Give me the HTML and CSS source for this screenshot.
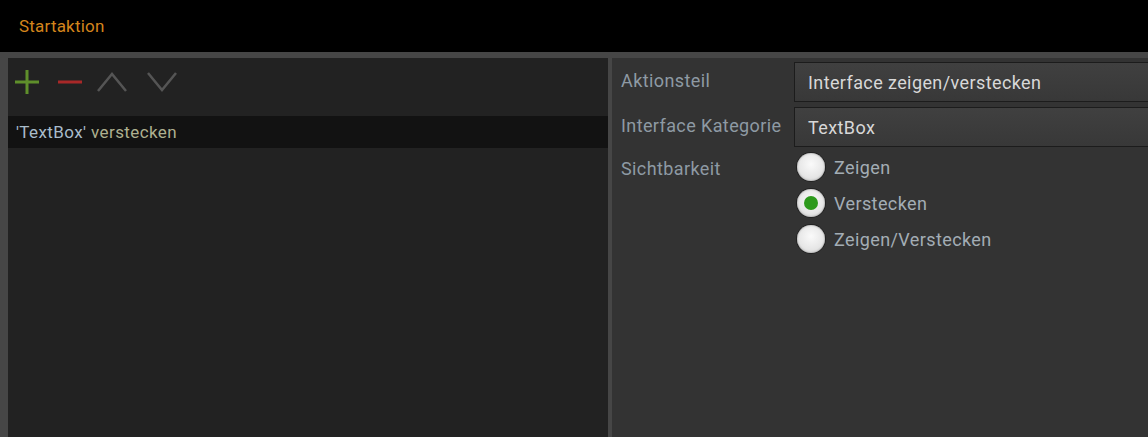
FILE: index.html
```html
<!DOCTYPE html>
<html>
<head>
<meta charset="utf-8">
<link rel="stylesheet" href="styles.css">
</head>
<body>
<div class="topbar"><span class="title">Startaktion</span></div>
<div class="main">
  <div class="left">
    <div class="toolbar">
      <svg class="ico plus" width="24" height="24" viewBox="0 0 24 24"><path d="M12 0V24M0 12H24" stroke="#5f8f2b" stroke-width="3"/></svg>
      <svg class="ico minus" width="24" height="24" viewBox="0 0 24 24"><path d="M0 12H24" stroke="#a82828" stroke-width="3"/></svg>
      <svg class="ico up" width="30" height="24" viewBox="0 0 30 24"><path d="M1 21L15 4L29 21" fill="none" stroke="#555" stroke-width="2.5"/></svg>
      <svg class="ico down" width="30" height="24" viewBox="0 0 30 24"><path d="M1 3L15 20L29 3" fill="none" stroke="#555" stroke-width="2.5"/></svg>
    </div>
    <div class="item"><span class="txt"><span class="q">'TextBox'</span> <span class="v">verstecken</span></span></div>
  </div>
  <div class="divider"></div>
  <div class="right">
    <div class="row">
      <div class="label">Aktionsteil</div>
      <div class="box">Interface zeigen/verstecken</div>
    </div>
    <div class="row">
      <div class="label">Interface Kategorie</div>
      <div class="box">TextBox</div>
    </div>
    <div class="row">
      <div class="label lbl-radio">Sichtbarkeit</div>
      <div class="radios">
        <div class="radio"><span class="dot"></span><span>Zeigen</span></div>
        <div class="radio on"><span class="dot"></span><span>Verstecken</span></div>
        <div class="radio"><span class="dot"></span><span>Zeigen/Verstecken</span></div>
      </div>
    </div>
  </div>
</div>
</body>
</html>
```

FILE: styles.css
```css
html, body {
  margin: 0;
  padding: 0;
  height: 100%;
  background: #333;
  overflow: hidden;
  font-family: "Roboto", "DejaVu Sans", sans-serif;
  font-size: 18px;
}
.topbar {
  height: 52px;
  background: #000;
  display: flex;
  align-items: center;
  padding-left: 19px;
}
.title {
  color: #d4851c;
  font-size: 17px;
  letter-spacing: 0.2px;
}
.main {
  display: flex;
  height: calc(100% - 52px);
  border-top: 6px solid #464646;
  box-sizing: border-box;
  padding-left: 8px;
  background: #464646;
}
.left {
  width: 600px;
  flex: none;
  background: #222;
}
.toolbar {
  height: 58px;
  box-sizing: border-box;
  display: flex;
  align-items: flex-start;
  padding-left: 7px;
  padding-top: 12px;
}
.toolbar .ico { display: block; }
.toolbar .minus { margin-left: 19px; }
.toolbar .up { margin-left: 15px; }
.toolbar .down { margin-left: 20px; }
.item {
  height: 32px;
  background: #121212;
  display: flex;
  align-items: center;
  padding-left: 8px;
  font-size: 17px;
  letter-spacing: 0.4px;
}
.item .q { color: #a9bccb; }
.item .v { color: #aeb090; }
.divider {
  width: 4px;
  flex: none;
  background: #464646;
}
.right {
  flex: 1;
  background: #333;
  padding-top: 4px;
  padding-left: 9px;
  display: flex;
  flex-direction: column;
  gap: 5px;
  min-width: 0;
  overflow: hidden;
}
.row {
  display: flex;
}
.label {
  flex: none;
  width: 173px;
  color: #8e9aa4;
  letter-spacing: 0.4px;
  line-height: 38px;
  white-space: nowrap;
}
.lbl-radio {
  line-height: 34px;
}
.box {
  flex: none;
  width: 400px;
  height: 40px;
  box-sizing: border-box;
  border: 1px solid #1c1c1c;
  border-right: none;
  background: linear-gradient(#404040, #383838);
  color: #d8d8d8;
  letter-spacing: 0.4px;
  padding-left: 13px;
  display: flex;
  align-items: center;
}
.radios {
  display: flex;
  flex-direction: column;
  gap: 8px;
  margin-left: 3px;
  padding-top: 1px;
}
.radio {
  display: flex;
  align-items: center;
  height: 28px;
  color: #a3adb5;
  letter-spacing: 0.4px;
}
.dot {
  width: 28px;
  height: 28px;
  border-radius: 50%;
  box-sizing: border-box;
  background: radial-gradient(circle at 50% 40%, #fafafa 0%, #e6e6e6 60%, #c8c8c8 100%);
  box-shadow: 0 0 0 1px #222, inset 0 0 2px #888;
  margin-right: 9px;
  position: relative;
  flex: none;
}
.radio.on .dot::after {
  content: "";
  position: absolute;
  left: 7px;
  top: 7px;
  width: 14px;
  height: 14px;
  border-radius: 50%;
  background: #2d9a1c;
}
```
